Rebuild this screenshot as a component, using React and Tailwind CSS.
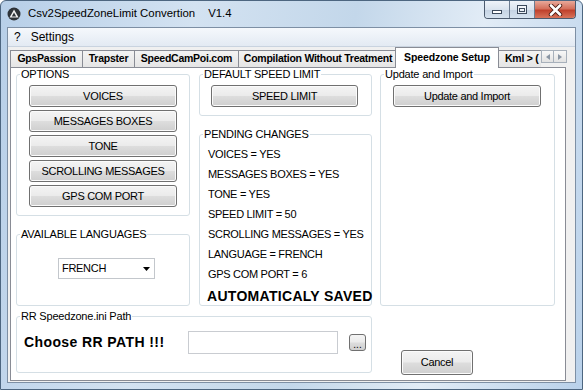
import React from 'react';

const OPTIONS = ['VOICES', 'MESSAGES BOXES', 'TONE', 'SCROLLING MESSAGES', 'GPS COM PORT'];

const PENDING = [
  'VOICES = YES',
  'MESSAGES BOXES = YES',
  'TONE = YES',
  'SPEED LIMIT = 50',
  'SCROLLING MESSAGES = YES',
  'LANGUAGE = FRENCH',
  'GPS COM PORT = 6',
];

const TABS = [
  { label: 'GpsPassion', w: 'w-[73px]' },
  { label: 'Trapster', w: 'w-[53px]' },
  { label: 'SpeedCamPoi.com', w: 'w-[105px]' },
  { label: 'Compilation Without Treatment', w: 'w-[160px]' },
];

function WinButton({ children, className = '' }) {
  return (
    <div
      className={`flex items-center justify-center border border-[#707070] rounded-[3px] bg-[linear-gradient(#f4f4f4_0%,#ebebeb_48%,#dddddd_52%,#cfcfcf_100%)] shadow-[inset_0_0_0_1px_#fbfbfb] text-[11px] tracking-[-0.3px] text-black ${className}`}
    >
      {children}
    </div>
  );
}

function Group({ label, className = '', children }) {
  return (
    <div className={`border border-[#d5dfe5] rounded-[3px] ${className}`}>
      <div className="-mt-[7px] ml-[3px] w-fit bg-white px-[1px] text-[11px] leading-[13px] tracking-[-0.2px] text-black">
        {label}
      </div>
      {children}
    </div>
  );
}

function TitleButtons() {
  return (
    <div className="flex self-start h-[18px] border border-t-0 border-[#4b5a6e] rounded-b-[4px] overflow-hidden">
      <div className="w-[25px] flex items-end justify-center pb-[4px] bg-[linear-gradient(#eef3f9,#d9e3ee_50%,#c5d3e3_51%,#d5e2ef)] border-r border-[#6c7c91]">
        <div className="w-[10px] h-[4px] bg-white border border-[#3c4a5c]" />
      </div>
      <div className="w-[25px] flex items-center justify-center bg-[linear-gradient(#eef3f9,#d9e3ee_50%,#c5d3e3_51%,#d5e2ef)] border-r border-[#6c7c91]">
        <div className="w-[10px] h-[9px] border border-[#3c4a5c] bg-white/60 flex items-center justify-center">
          <div className="w-[6px] h-[4px] border border-[#3c4a5c]" />
        </div>
      </div>
      <div className="w-[40px] flex items-center justify-center bg-[linear-gradient(#e8a99a,#d4705c_45%,#c0412c_55%,#d8735a)]">
        <svg width="15" height="12" viewBox="0 0 15 12">
          <path d="M3 1.5 L12 10.5 M12 1.5 L3 10.5" stroke="#4a1a12" strokeWidth="4.4" strokeLinecap="round" />
          <path d="M3 1.5 L12 10.5 M12 1.5 L3 10.5" stroke="#ffffff" strokeWidth="2.6" strokeLinecap="round" />
        </svg>
      </div>
    </div>
  );
}

export default function App() {
  return (
    <div className="w-[583px] h-[390px] overflow-hidden flex flex-col bg-[linear-gradient(100deg,#b7cfe8_0%,#d3e2f1_30%,#c3d7ea_55%,#e2ecf6_75%,#b9d1ea_100%)] border border-[#4d6680] rounded-t-[6px] font-['Liberation_Sans',Arial,sans-serif] text-black">
      {/* Title bar */}
      <div className="h-[26px] flex items-center pl-[6px] pr-[6px] shrink-0">
        <svg width="14" height="14" viewBox="0 0 14 14" className="shrink-0">
          <circle cx="7" cy="7" r="6.5" fill="#2e3338" />
          <path d="M7 2.5 L11.5 10.5 L2.5 10.5 Z" fill="#f2f2f2" />
          <path d="M7 5.5 L9.2 9.4 L4.8 9.4 Z" fill="#2e3338" />
        </svg>
        <span className="ml-[7px] text-[11.4px] leading-none">Csv2SpeedZoneLimit Convertion</span>
        <span className="ml-[13px] text-[11.4px] leading-none">V1.4</span>
        <div className="flex-1" />
        <TitleButtons />
      </div>

      {/* Client area */}
      <div className="mx-[6px] mb-[6px] flex-1 flex flex-col bg-[#f0f0f0] border border-[#7d8fa4]">
        {/* Menu */}
        <div className="h-[19px] flex items-center text-[12px] bg-[linear-gradient(#f5f8fc,#e3eaf3)] border-b border-[#c9d3df] shrink-0">
          <span className="ml-[6px]">?</span>
          <span className="ml-[10px]">Settings</span>
        </div>

        {/* Tabs */}
        <div className="h-[20px] flex items-end pl-[2px] shrink-0">
          {TABS.map((t) => (
            <div
              key={t.label}
              className={`${t.w} h-[17px] shrink-0 flex items-center justify-center border border-b-0 border-[#898c95] -mr-[1px] bg-[linear-gradient(#f3f3f3,#e5e5e5)] text-[10.5px] font-bold tracking-[-0.25px] whitespace-nowrap`}
            >
              {t.label}
            </div>
          ))}
          <div className="w-[104px] h-[21px] shrink-0 -mb-[1px] -ml-[2px] -mr-[2px] flex items-center justify-center border border-b-0 border-[#898c95] bg-white text-[10.5px] font-bold tracking-[-0.1px] relative z-10">
            Speedzone Setup
          </div>
          <div className="w-[44px] h-[17px] shrink-0 flex items-center pl-[7px] border border-b-0 border-r-0 border-[#898c95] bg-[linear-gradient(#f3f3f3,#e5e5e5)] text-[10.5px] font-bold tracking-[-0.25px] overflow-hidden whitespace-nowrap">
            Kml &gt; (
          </div>
          <div className="flex self-start mt-[3px]">
            <div className="w-[13px] h-[13px] border border-[#a7b0bb] bg-[linear-gradient(#f8f8f8,#e2e2e2)] flex items-center justify-center">
              <svg width="4" height="6" viewBox="0 0 4 6"><path d="M4 0 L0 3 L4 6 Z" fill="#8a96a4" /></svg>
            </div>
            <div className="w-[13px] h-[13px] border border-l-0 border-[#a7b0bb] bg-[linear-gradient(#f8f8f8,#e2e2e2)] flex items-center justify-center">
              <svg width="4" height="6" viewBox="0 0 4 6"><path d="M0 0 L4 3 L0 6 Z" fill="#8a96a4" /></svg>
            </div>
          </div>
        </div>

        {/* Tab panel */}
        <div className="ml-[2px] w-[556px] h-[314px] border border-[#898c95] bg-white pl-[5px] pt-[6px]">
          <div className="flex">
            {/* Column 1 */}
            <div className="w-[174px] flex flex-col">
              <Group label="OPTIONS" className="h-[142px]">
                <div className="mt-[4px] ml-[12px] flex flex-col gap-[3px]">
                  {OPTIONS.map((o) => (
                    <WinButton key={o} className="w-[148px] h-[22px]">{o}</WinButton>
                  ))}
                </div>
              </Group>
              <Group label="AVAILABLE LANGUAGES" className="h-[72px] mt-[18px]">
                <div className="mt-[17px] ml-[41px] w-[97px] h-[21px] border border-[#c3c7cc] bg-white flex items-center pl-[3px] pr-[4px] text-[11px] tracking-[-0.3px]">
                  <span className="flex-1">FRENCH</span>
                  <svg width="7" height="4" viewBox="0 0 7 4"><path d="M0 0 L7 0 L3.5 4 Z" fill="#000" /></svg>
                </div>
              </Group>
            </div>

            {/* Column 2 */}
            <div className="w-[173px] ml-[9px] flex flex-col">
              <Group label="DEFAULT SPEED LIMIT" className="h-[42px]">
                <WinButton className="mt-[4px] ml-[11px] w-[147px] h-[22px]">SPEED LIMIT</WinButton>
              </Group>
              <Group label="PENDING CHANGES" className="h-[172px] mt-[18px]">
                <div className="mt-[3px] pl-[8px] flex flex-col text-[11px] tracking-[-0.3px]">
                  {PENDING.map((p) => (
                    <div key={p} className="h-[20px] leading-[20px]">{p}</div>
                  ))}
                  <div className="h-[22px] leading-[24px] text-[14px] font-bold tracking-[0.3px] -ml-[1px] whitespace-nowrap">AUTOMATICALY SAVED</div>
                </div>
              </Group>
            </div>

            {/* Column 3 */}
            <div className="w-[175px] ml-[8px]">
              <Group label="Update and Import" className="h-[232px]">
                <WinButton className="mt-[4px] ml-[12px] w-[148px] h-[22px]">Update and Import</WinButton>
              </Group>
            </div>
          </div>

          {/* Bottom row */}
          <div className="flex mt-[10px]">
            <Group label="RR Speedzone.ini Path" className="w-[356px] h-[57px]">
              <div className="mt-[8px] flex items-center h-[23px]">
                <span className="w-[171px] pl-[7px] text-[14px] font-bold tracking-[0.4px] whitespace-nowrap">Choose RR PATH !!!</span>
                <div className="w-[150px] h-[23px] border border-[#c9ccd1] bg-white" />
                <div className="ml-[11px] w-[17px] h-[17px] border border-[#707070] rounded-[3px] bg-[linear-gradient(#f4f4f4,#ebebeb_48%,#dddddd_52%,#cfcfcf)] flex items-end justify-center text-[10px] leading-[11px]">
                  ...
                </div>
              </div>
            </Group>
            <WinButton className="ml-[29px] mt-[34px] w-[72px] h-[25px]">Cancel</WinButton>
          </div>
        </div>
      </div>
    </div>
  );
}
